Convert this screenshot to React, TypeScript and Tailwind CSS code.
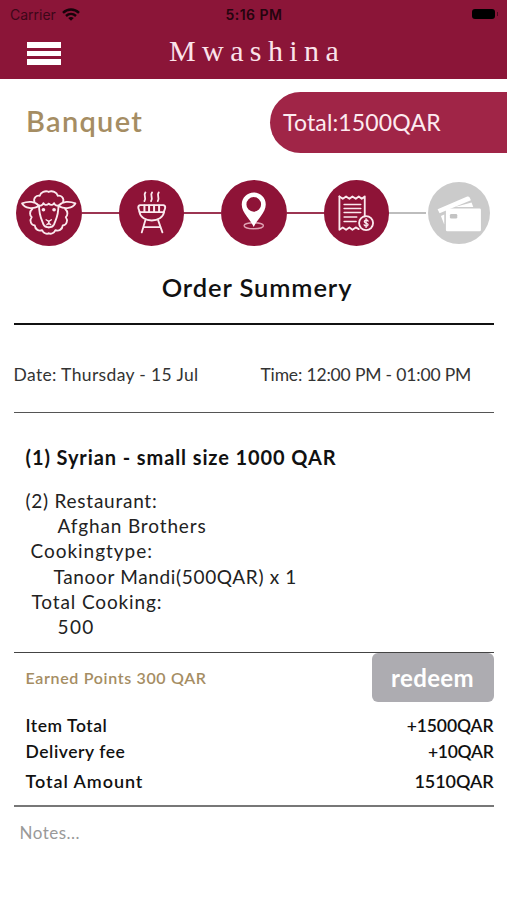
import type { ReactNode } from "react";

function StepIcon({ cx, cy, children }: { cx: number; cy: number; children: ReactNode }) {
  return (
    <svg
      viewBox={`${cx - 98.25} ${cy - 98.25} 196.5 196.5`}
      className="size-[65.5px] shrink-0 rounded-full bg-[#8e1337] text-[#fbe9ee]"
      fill="none"
      stroke="currentColor"
      strokeWidth={5.5}
      strokeLinecap="round"
      strokeLinejoin="round"
    >
      {children}
    </svg>
  );
}

function Connector() {
  return <div className="h-[2.5px] w-[37px] shrink-0 bg-[#9c3552]" />;
}

function Sheep() {
  const half = (
    <>
      <path d="M117 66 C106 62 93 67 90 78 C80 76 70 84 74 97" />
      <path d="M86 107 C76 94 54 94 37 101 C46 116 68 119 86 110" />
      <path d="M117 102 C110 108 103 105 101 100 C98 107 92 109 88 107 C87 135 96 150 101 164 C104 171 110 173 117 173" />
      <path d="M68 117 C58 126 60 137 66 142 C58 153 64 166 75 167 C76 180 88 185 97 181 C101 190 110 194 117 191" />
      <circle cx="101" cy="120" r="5.5" fill="currentColor" stroke="none" />
      <path d="M109 150 L117 155 V162 M111 165 Q113 162 117 162" strokeWidth={4} />
    </>
  );
  return (
    <StepIcon cx={117} cy={129}>
      {half}
      <g transform="translate(234 0) scale(-1 1)">{half}</g>
    </StepIcon>
  );
}

function Grill() {
  return (
    <StepIcon cx={125} cy={131}>
      <path d="M106 70 C98 80 111 86 103 96 M126 70 C118 80 131 86 123 96 M146 70 C138 80 151 86 143 96" />
      <path d="M90 108 H160 Q167 110 165 118 L161 129 H89 L85 118 Q83 110 90 108 Z" />
      <path d="M103 109 V128 M117 109 V128 M132 109 V128 M147 109 V128" strokeWidth={6} />
      <path d="M88 128 C92 163 158 163 162 128" />
      <path d="M106 153 L95 190 M144 153 L157 190 M101 174 H150" />
    </StepIcon>
  );
}

function Pin() {
  return (
    <StepIcon cx={132} cy={131}>
      <ellipse cx="132" cy="170" rx="29" ry="9" stroke="#e0a3b4" strokeWidth={4} />
      <path
        d="M132 174 C124 152 96 132 96 106 A36 36 0 0 1 168 106 C168 132 140 152 132 174 Z M132 84 A22 22 0 1 0 132 128 A22 22 0 1 0 132 84 Z"
        fill="#fff"
        fillRule="evenodd"
        stroke="none"
      />
    </StepIcon>
  );
}

function Receipt() {
  return (
    <StepIcon cx={140} cy={131}>
      <path d="M88 82 L98 89 L108 82 L118 89 L127 82 L137 89 L146 82 L155 89 L164 82 V142" />
      <path d="M88 82 V182 L98 175 L108 182 L118 175 L127 182 L137 175 L146 180" />
      <path d="M102 106 H152 M102 118 H152 M102 130 H152 M102 144 H140 M102 157 H138" strokeWidth={4.5} />
      <circle cx="168" cy="162" r="21" />
      <path d="M174 156 C171 151 162 152 163 158 C164 163 174 161 174 167 C173 173 164 172 162 167 M168 149 V175" strokeWidth={4} />
    </StepIcon>
  );
}

function Cards() {
  return (
    <svg viewBox="53.25 38.25 187.5 187.5" className="ml-[1.7px] size-[62.5px] shrink-0 rounded-full bg-[#cbcbcb]">
      <path d="M82 120 L171 82 Q177 80 179 86 L182 93 L88 132 Z" fill="#fff" />
      <path d="M92 140 L102 136 V166 Z" fill="#fff" />
      <path d="M134 113 L184 100 L189 113 Z" fill="#fff" />
      <rect x="107" y="118" width="105" height="68" rx="4" fill="#fff" />
      <rect x="119" y="134" width="22" height="14" rx="4" fill="#c4c4c4" />
    </svg>
  );
}

export default function App() {
  return (
    <div className="flex h-[900px] w-[507px] flex-col overflow-hidden bg-white font-['Lato',sans-serif] text-[#111]">
      <header className="h-[79px] bg-[#8b1538]">
        <div className="grid h-7 grid-cols-3 items-center pl-[10px] pr-[9px] font-['Inter',sans-serif] text-[14px] text-[#3d0718]">
          <div className="flex items-center gap-[6px]">
            <span>Carrier</span>
            <svg viewBox="0 0 18 13" className="h-[13px] w-[18px]" fill="none" stroke="#16030a" strokeWidth={2.4}>
              <path d="M1 4.8 C5.5 0.4 12.5 0.4 17 4.8 M4 8 C7 5.2 11 5.2 14 8" />
              <path d="M9 12.8 L6.2 10 Q9 7.8 11.8 10 Z" fill="#16030a" stroke="none" />
            </svg>
          </div>
          <div className="text-center font-semibold tracking-[0.5px] text-[#24040e]">5:16 PM</div>
          <div className="flex items-center justify-end gap-[2px]">
            <div className="h-[10px] w-[23px] rounded-[3px] bg-black" />
            <div className="h-1 w-px bg-[#4a0a1e]" />
          </div>
        </div>
        <div className="flex h-[46px] items-center pl-[27px]">
          <div className="flex w-[34px] flex-col gap-[3px] pt-[5px]">
            <div className="h-[5.5px] bg-white" />
            <div className="h-[5.5px] bg-white" />
            <div className="h-[5.5px] bg-white" />
          </div>
          <span className="ml-[108px] font-['Liberation_Serif',serif] text-[30px] leading-none tracking-[6.4px] text-[#fbe3ea]">
            Mwashina
          </span>
        </div>
      </header>

      <div className="mt-3 flex h-[62px] items-center justify-between pl-[26px]">
        <span className="pb-[2px] text-[29px] font-semibold tracking-[1.3px] text-[#a58d63]">Banquet</span>
        <div className="flex h-[61px] w-[237px] items-center rounded-l-full bg-[#a02547] pl-[13px] text-[23px] tracking-[0.15px] text-[#fdebf0]">
          Total:1500QAR
        </div>
      </div>

      <div className="mt-[27px] flex h-[66px] items-center pl-[16px]">
        <Sheep />
        <Connector />
        <Grill />
        <Connector />
        <Pin />
        <Connector />
        <Receipt />
        <div className="h-[2.5px] w-[37px] shrink-0 bg-[#bdbdbd]" />
        <Cards />
      </div>

      <main className="mx-[13.5px] flex flex-col">
        <h1 className="flex h-[79px] items-center justify-center border-b-2 border-[#111] pl-[7px] pt-[5px] text-[25.5px] font-semibold tracking-[0.9px]">
          Order Summery
        </h1>
        <div className="flex h-[88px] items-center border-b-[1.5px] border-[#555] pt-[14px] text-[17.5px] text-[#333]">
          <span className="w-[247px] tracking-[0.36px]">Date: Thursday - 15 Jul</span>
          <span className="tracking-[-0.17px]">Time: 12:00 PM - 01:00 PM</span>
        </div>

        <section className="h-[240px] border-b border-[#444] pl-3 pt-[32px] text-[19px] text-[#222]">
          <h2 className="mb-[18px] text-[20px] font-bold leading-[25px] tracking-[0.9px] text-[#111]">
            (1) Syrian - small size 1000 QAR
          </h2>
          <div className="flex flex-col items-start leading-[25.2px]">
            <span className="tracking-[0.75px]">(2) Restaurant:</span>
            <span className="ml-8 tracking-[0.86px]">Afghan Brothers</span>
            <span className="ml-[5px] tracking-[0.97px]">Cookingtype:</span>
            <span className="ml-7 tracking-[0.66px]">Tanoor Mandi(500QAR) x 1</span>
            <span className="ml-[6px] tracking-[0.88px]">Total Cooking:</span>
            <span className="ml-8 tracking-[1.4px]">500</span>
          </div>
        </section>

        <section className="h-[154px] border-b-2 border-[#777]">
          <div className="flex h-[49px] items-center justify-between pl-3">
            <span className="text-[16px] font-semibold tracking-[0.66px] text-[#a58d63]">Earned Points 300 QAR</span>
            <button className="flex h-[49px] w-[122px] items-center justify-center rounded-md bg-[#adacb1] text-[24px] font-bold tracking-[0.4px] text-white">
              redeem
            </button>
          </div>
          <div className="pl-3 pt-3 text-[17.5px] font-semibold">
            <div className="flex h-[25px] items-center justify-between">
              <span className="tracking-[0.55px]">Item Total</span>
              <span className="tracking-[-0.1px]">+1500QAR</span>
            </div>
            <div className="flex h-[27px] items-center justify-between">
              <span className="tracking-[0.55px]">Delivery fee</span>
              <span className="tracking-[-0.3px]">+10QAR</span>
            </div>
            <div className="flex h-[30px] items-center justify-between text-[18px]">
              <span className="tracking-[0.93px]">Total Amount</span>
              <span className="tracking-[-0.1px]">1510QAR</span>
            </div>
          </div>
        </section>
        <div className="pl-[6px] pt-[14px] text-[17px] leading-6 tracking-[0.5px] text-[#999]">Notes...</div>
      </main>
    </div>
  );
}
